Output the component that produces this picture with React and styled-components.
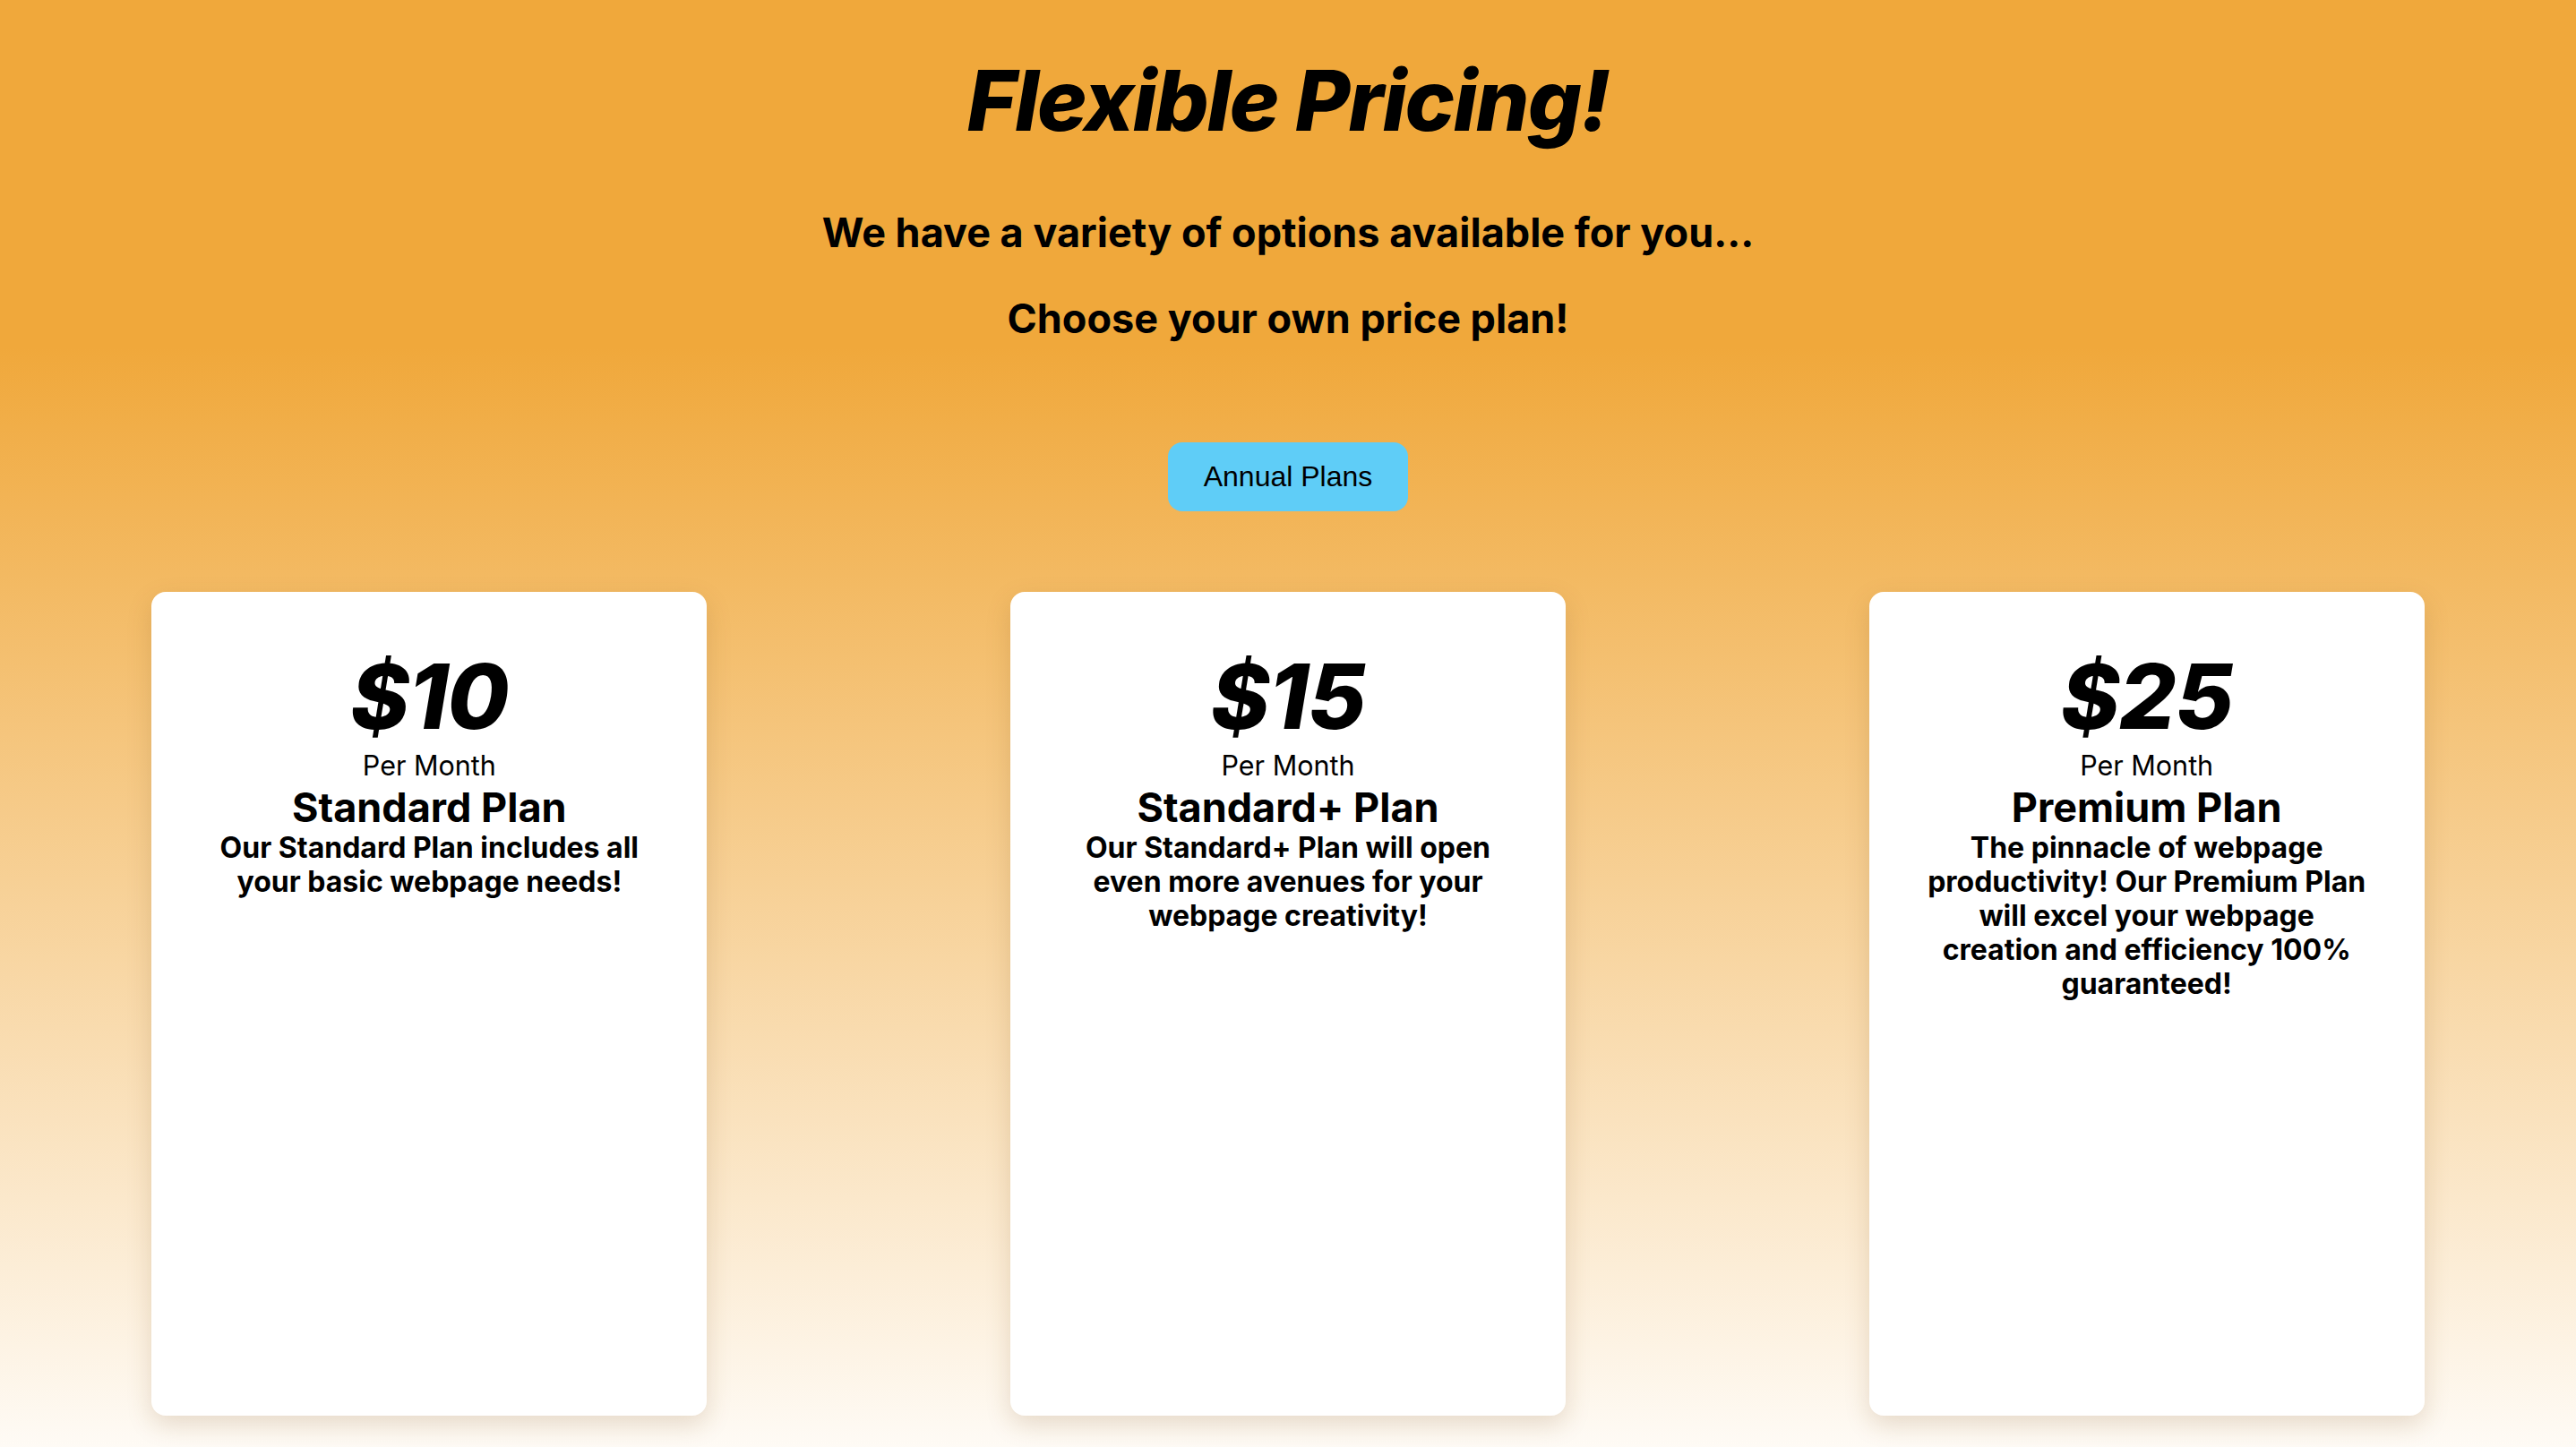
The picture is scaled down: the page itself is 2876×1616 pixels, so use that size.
import React from "react";
import styled, { createGlobalStyle } from "styled-components";

const GlobalStyle = createGlobalStyle`
  html, body {
    margin: 0;
    padding: 0;
  }
  body {
    font-family: Inter, "Noto Sans", sans-serif;
    color: #000;
  }
`;

const Page = styled.div`
  min-height: 100vh;
  box-sizing: border-box;
  padding: 56px 0 34px;
  background: linear-gradient(to bottom, #f0a83b 24%, #ffffff 104%);
  display: flex;
  flex-direction: column;
  align-items: center;
`;

const Title = styled.h1`
  margin: 0;
  font-size: 94px;
  line-height: 1.2;
  font-style: italic;
  font-weight: 800;
  letter-spacing: -1.7px;
`;

const Subtitle = styled.h2`
  margin: ${(p) => p.$top}px 0 0;
  font-size: 45px;
  line-height: 1.2;
  font-weight: 700;
`;

const ToggleButton = styled.button`
  margin-top: 111px;
  height: 77px;
  padding: 0 40px;
  border: none;
  border-radius: 16px;
  background: #5fcdf7;
  color: #000;
  font-family: "Liberation Sans", Arial, sans-serif;
  font-size: 32px;
  cursor: pointer;
`;

const Cards = styled.div`
  align-self: stretch;
  margin-top: 90px;
  display: flex;
  justify-content: space-around;
`;

const Card = styled.div`
  width: 620px;
  height: 920px;
  box-sizing: border-box;
  padding: 62px 60px 0;
  background: #fff;
  border-radius: 16px;
  box-shadow: 0 10px 28px rgba(120, 80, 20, 0.18);
  display: flex;
  flex-direction: column;
  align-items: center;
  text-align: center;
`;

const Price = styled.div`
  font-size: 100px;
  line-height: 110px;
  font-style: italic;
  font-weight: 800;
  letter-spacing: -1px;
`;

const Period = styled.div`
  font-size: 30.5px;
  line-height: 43px;
  font-weight: 400;
`;

const PlanName = styled.div`
  font-size: 45px;
  line-height: 52px;
  font-weight: 700;
`;

const Description = styled.p`
  margin: 0;
  font-size: 32px;
  line-height: 38px;
  font-weight: 700;
`;

const plans = [
  {
    price: "$10",
    name: "Standard Plan",
    text: "Our Standard Plan includes all your basic webpage needs!",
  },
  {
    price: "$15",
    name: "Standard+ Plan",
    text: "Our Standard+ Plan will open even more avenues for your webpage creativity!",
  },
  {
    price: "$25",
    name: "Premium Plan",
    text: "The pinnacle of webpage productivity! Our Premium Plan will excel your webpage creation and efficiency 100% guaranteed!",
  },
];

const App = () => {
  return (
    <Page>
      <GlobalStyle />
      <Title>Flexible Pricing!</Title>
      <Subtitle $top={64}>We have a variety of options available for you...</Subtitle>
      <Subtitle $top={42}>Choose your own price plan!</Subtitle>
      <ToggleButton>Annual Plans</ToggleButton>

      <Cards>
        {plans.map((plan) => (
          <Card key={plan.name}>
            <Price>{plan.price}</Price>
            <Period>Per Month</Period>
            <PlanName>{plan.name}</PlanName>
            <Description>{plan.text}</Description>
          </Card>
        ))}
      </Cards>
    </Page>
  );
};

export default App;
